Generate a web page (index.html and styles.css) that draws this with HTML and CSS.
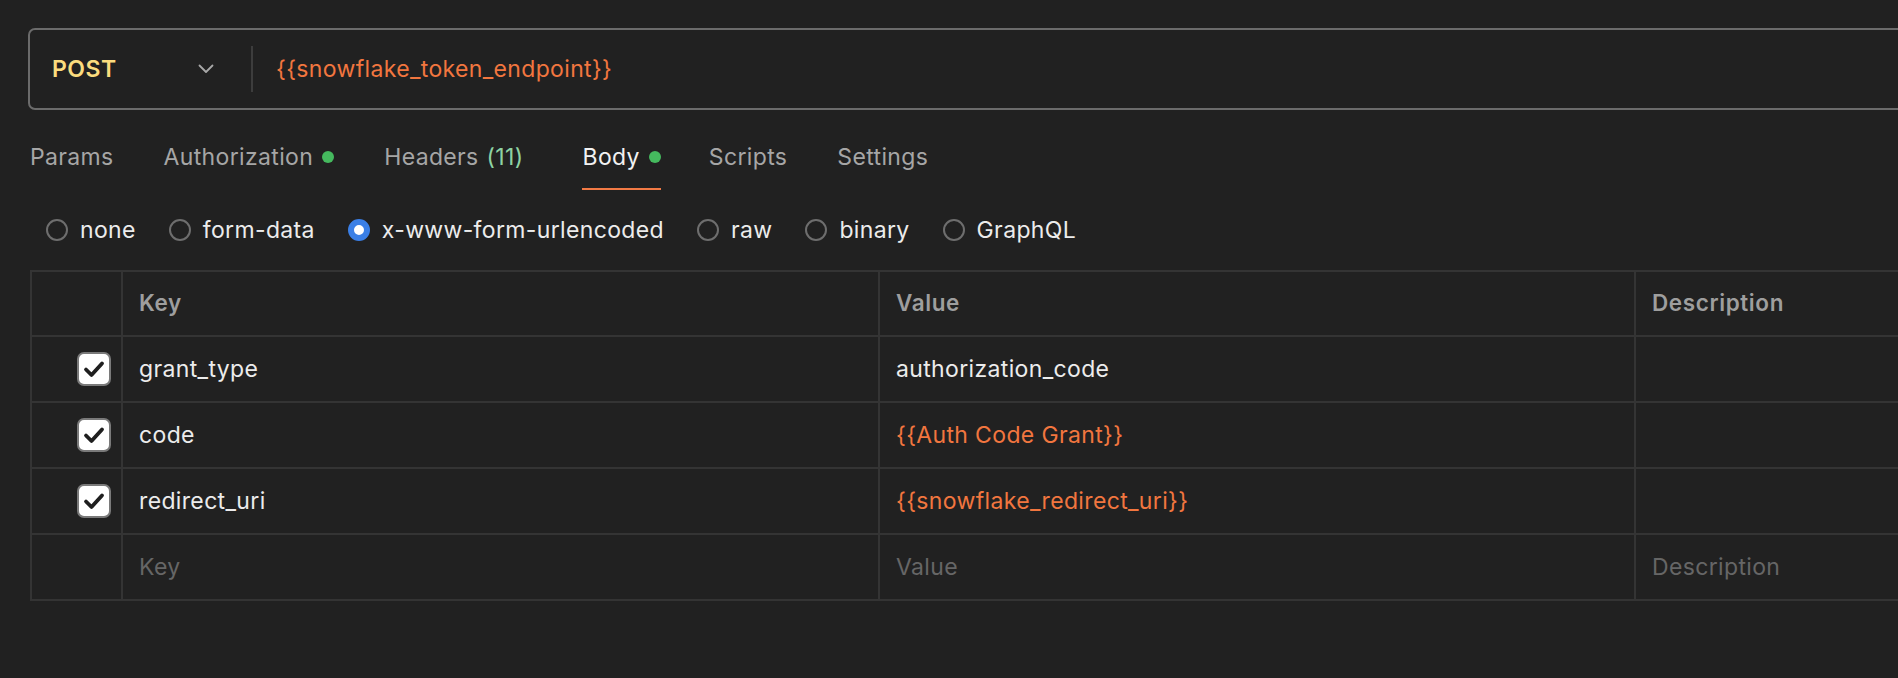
FILE: index.html
```html
<!DOCTYPE html>
<html>
<head>
<meta charset="utf-8">
<link rel="stylesheet" href="styles.css">
</head>
<body>
<div class="page">
  <div class="urlbar">
    <div class="method">
      <span class="method-name">POST</span>
      <svg class="chevron" width="16" height="10" viewBox="0 0 16 10"><polyline points="1.5,1.5 8,8 14.5,1.5" fill="none" stroke="#a8a8a8" stroke-width="1.8" stroke-linecap="round" stroke-linejoin="round"/></svg>
    </div>
    <div class="divider"></div>
    <div class="url">{{snowflake_token_endpoint}}</div>
  </div>

  <div class="tabs">
    <div class="tab">Params</div>
    <div class="tab">Authorization<span class="dot"></span></div>
    <div class="tab tab-headers">Headers <span class="count">(11)</span></div>
    <div class="tab active">Body<span class="dot"></span></div>
    <div class="tab">Scripts</div>
    <div class="tab">Settings</div>
  </div>

  <div class="radios">
    <div class="radio"><span class="circle"></span>none</div>
    <div class="radio"><span class="circle"></span>form-data</div>
    <div class="radio"><span class="circle checked"></span>x-www-form-urlencoded</div>
    <div class="radio"><span class="circle"></span>raw</div>
    <div class="radio"><span class="circle"></span>binary</div>
    <div class="radio"><span class="circle"></span>GraphQL</div>
  </div>

  <div class="grid">
    <div class="cell head"></div>
    <div class="cell head">Key</div>
    <div class="cell head">Value</div>
    <div class="cell head">Description</div>

    <div class="cell chk"><span class="box"><svg width="34" height="34" viewBox="0 0 34 34"><polyline points="9,17.5 14.5,23 25,11.5" fill="none" stroke="#1f1f1f" stroke-width="3.8" stroke-linecap="round" stroke-linejoin="round"/></svg></span></div>
    <div class="cell">grant_type</div>
    <div class="cell">authorization_code</div>
    <div class="cell"></div>

    <div class="cell chk"><span class="box"><svg width="34" height="34" viewBox="0 0 34 34"><polyline points="9,17.5 14.5,23 25,11.5" fill="none" stroke="#1f1f1f" stroke-width="3.8" stroke-linecap="round" stroke-linejoin="round"/></svg></span></div>
    <div class="cell">code</div>
    <div class="cell var">{{Auth Code Grant}}</div>
    <div class="cell"></div>

    <div class="cell chk"><span class="box"><svg width="34" height="34" viewBox="0 0 34 34"><polyline points="9,17.5 14.5,23 25,11.5" fill="none" stroke="#1f1f1f" stroke-width="3.8" stroke-linecap="round" stroke-linejoin="round"/></svg></span></div>
    <div class="cell">redirect_uri</div>
    <div class="cell var">{{snowflake_redirect_uri}}</div>
    <div class="cell"></div>

    <div class="cell"></div>
    <div class="cell ph">Key</div>
    <div class="cell ph">Value</div>
    <div class="cell ph">Description</div>
  </div>
</div>
</body>
</html>
```
FILE: styles.css
```css
html, body {
  margin: 0;
  padding: 0;
  background: #212121;
  overflow: hidden;
}
body {
  font-family: Inter, "Noto Sans", sans-serif;
  color: #e8e8e8;
  width: 1898px;
  height: 678px;
  letter-spacing: 0.35px;
}
.page {
  padding-top: 28px;
}
.urlbar {
  margin-left: 28px;
  margin-right: -40px;
  height: 78px;
  border: 2px solid #6b6b6b;
  border-radius: 7px;
  display: flex;
  align-items: center;
}
.method {
  width: 221px;
  box-sizing: border-box;
  padding-left: 22px;
  padding-right: 37px;
  display: flex;
  align-items: center;
  justify-content: space-between;
}
.method-name {
  color: #fbdc7e;
  font-weight: 600;
  font-size: 23px;
  letter-spacing: 0.5px;
}
.chevron {
  display: block;
}
.divider {
  width: 2px;
  height: 46px;
  background: #3d3d3d;
}
.url {
  margin-left: 23px;
  color: #f2763f;
  font-size: 23px;
}
.tabs {
  display: flex;
  gap: 50px;
  margin-left: 30px;
  height: 80px;
  align-items: stretch;
}
.tab {
  display: flex;
  align-items: center;
  font-size: 23px;
  color: #a6a6a6;
  box-sizing: border-box;
  padding-top: 15px;
  border-bottom: 2px solid transparent;
}
.tab-headers {
  margin-right: 9px;
}
.tab.active {
  color: #f2f2f2;
  border-bottom-color: #f27a45;
  margin-right: -2px;
}
.dot {
  width: 12px;
  height: 12px;
  border-radius: 50%;
  background: #45b95e;
  margin-left: 9px;
}
.count {
  color: #8ed3a3;
  margin-left: 8px;
}
.radios {
  display: flex;
  gap: 33px;
  margin-left: 46px;
  height: 80px;
  align-items: center;
}
.radio {
  display: flex;
  align-items: center;
  gap: 12px;
  font-size: 23px;
  color: #ececec;
}
.circle {
  width: 22px;
  height: 22px;
  box-sizing: border-box;
  border: 2px solid #6e6e6e;
  border-radius: 50%;
}
.circle.checked {
  border: 6px solid #3a7fe6;
  background: #ffffff;
}
.grid {
  margin-left: 30px;
  width: 2100px;
  display: grid;
  grid-template-columns: 91px 757px 756px 496px;
  grid-template-rows: 65px;
  grid-auto-rows: 66px;
  border-top: 2px solid #343434;
  border-left: 2px solid #343434;
}
.cell {
  box-sizing: border-box;
  border-right: 2px solid #343434;
  border-bottom: 2px solid #343434;
  display: flex;
  align-items: center;
  padding: 0 16px;
  font-size: 23px;
  color: #ececec;
}
.cell.head {
  font-weight: 600;
  font-size: 22.5px;
  color: #9e9e9e;
  letter-spacing: 0.6px;
  padding-bottom: 2px;
}
.cell.var {
  color: #f2763f;
}
.cell.ph {
  color: #666666;
}
.cell.chk {
  justify-content: flex-end;
  padding: 0 10px 0 0;
}
.box {
  width: 34px;
  height: 34px;
  box-sizing: border-box;
  border: 2px solid #7a7a7a;
  border-radius: 7px;
  background: #ffffff;
  display: flex;
  align-items: center;
  justify-content: center;
  overflow: hidden;
}
.box svg {
  display: block;
  flex: none;
}
```
